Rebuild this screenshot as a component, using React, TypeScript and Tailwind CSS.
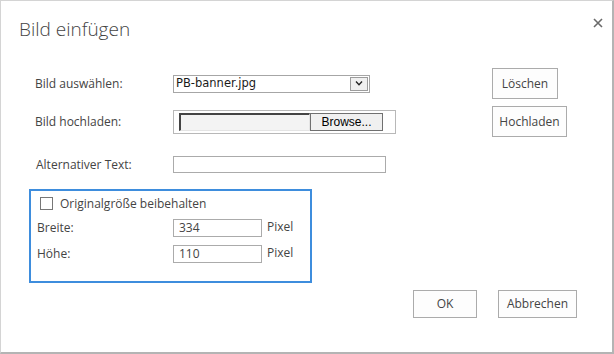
import React, { useState } from 'react';

const labelFont = "font-['Segoe_UI','Open_Sans',sans-serif]";

const DialogButton: React.FC<{ label: string; className?: string }> = ({ label, className = '' }) => (
  <button
    className={`flex items-center justify-center border border-[#ababab] bg-[#fdfdfd] text-[12px] text-[#444] ${labelFont} ${className}`}
  >
    {label}
  </button>
);

const App: React.FC = () => {
  const [keepSize, setKeepSize] = useState(false);

  return (
    <div className="w-[614px] h-[354px] bg-white border-l border-t border-[#d4d4d4] border-r-2 border-b-2 border-r-[#b4b4b4] border-b-[#b4b4b4] flex flex-col text-[#444]">
      {/* Kopfzeile */}
      <div className="flex justify-between pl-[18px] pr-[7px] pt-[14px]">
        <h1 className="font-['Open_Sans',sans-serif] font-light text-[19px] leading-[28px] text-[#444]">Bild einfügen</h1>
        <button className="w-[14px] h-[14px] mt-[1px] flex items-center justify-center text-[#666]">
          <svg width="10" height="10" viewBox="0 0 10 10">
            <path d="M1 1 L9 9 M9 1 L1 9" stroke="#6a6a6a" strokeWidth="1.6" />
          </svg>
        </button>
      </div>

      {/* Bild auswählen */}
      <div className={`flex items-center mt-[25px] h-[31px] pl-[34px] text-[12px] ${labelFont}`}>
        <span className="w-[138px]">Bild auswählen:</span>
        <div className="w-[319px]">
          <div className="w-[197px] h-[18px] border border-[#a6a6a6] flex items-center bg-white">
            <span className="flex-1 pl-[2px] text-[11.5px] text-[#1a1a1a] font-['DejaVu_Sans',sans-serif] leading-none">PB-banner.jpg</span>
            <span className="w-[18px] h-[14px] mr-[1px] border border-[#9c9c9c] bg-[#f0f0f0] flex items-center justify-center">
              <svg width="8" height="5" viewBox="0 0 8 5">
                <path d="M1 0.5 L4 3.8 L7 0.5" stroke="#222" strokeWidth="1.3" fill="none" />
              </svg>
            </span>
          </div>
        </div>
        <DialogButton label="Löschen" className="w-[66px] h-[31px]" />
      </div>

      {/* Bild hochladen */}
      <div className={`flex items-center mt-[7px] h-[31px] pl-[34px] text-[12px] ${labelFont}`}>
        <span className="w-[138px]">Bild hochladen:</span>
        <div className="w-[319px]">
          <div className="w-[223px] h-[24px] border border-[#b8b8b8] flex items-center pl-[5px]">
            <span className="w-[131px] h-[18px] border-t-2 border-l-2 border-[#444] border-b border-r border-b-[#e4e4e4] border-r-[#e4e4e4] bg-[#f3f3f3]" />
            <span className="w-[73px] h-[18px] border border-[#707070] bg-[#f0f0f0] flex items-center justify-center text-[12px] text-black font-['Liberation_Sans',sans-serif]">
              Browse...
            </span>
          </div>
        </div>
        <DialogButton label="Hochladen" className="w-[75px] h-[31px]" />
      </div>

      {/* Alternativer Text */}
      <div className={`flex items-center mt-[19px] h-[17px] pl-[35px] text-[12px] ${labelFont}`}>
        <span className="w-[137px]">Alternativer Text:</span>
        <span className="w-[213px] h-[17px] border border-[#ababab] bg-white" />
      </div>

      {/* Größe */}
      <div className={`ml-[28px] mt-[16px] w-[283px] h-[94px] border-2 border-[#3e8ddd] pl-[6px] text-[12px] ${labelFont}`}>
        <label className="flex items-center mt-[6px] h-[13px] ml-[3px]">
          <input
            type="checkbox"
            checked={keepSize}
            onChange={() => setKeepSize(!keepSize)}
            className="appearance-none w-[13px] h-[13px] border border-[#777] bg-white mr-[7px]"
          />
          <span>Originalgröße beibehalten</span>
        </label>
        <div className="flex items-center mt-[9px] h-[18px]">
          <span className="w-[136px]">Breite:</span>
          <span className="w-[89px] h-[18px] border border-[#ababab] flex items-center pl-[5px] text-[12px] text-[#444]">334</span>
          <span className="ml-[5px] -mt-[3px]">Pixel</span>
        </div>
        <div className="flex items-center mt-[8px] h-[18px]">
          <span className="w-[136px]">Höhe:</span>
          <span className="w-[89px] h-[18px] border border-[#ababab] flex items-center pl-[5px] text-[12px] text-[#444]">110</span>
          <span className="ml-[5px] -mt-[3px]">Pixel</span>
        </div>
      </div>

      {/* Fußzeile */}
      <div className="flex justify-end gap-[21px] mt-[7px] pr-[35px]">
        <DialogButton label="OK" className="w-[64px] h-[28px]" />
        <DialogButton label="Abbrechen" className="w-[79px] h-[28px]" />
      </div>
    </div>
  );
};

export default App;
